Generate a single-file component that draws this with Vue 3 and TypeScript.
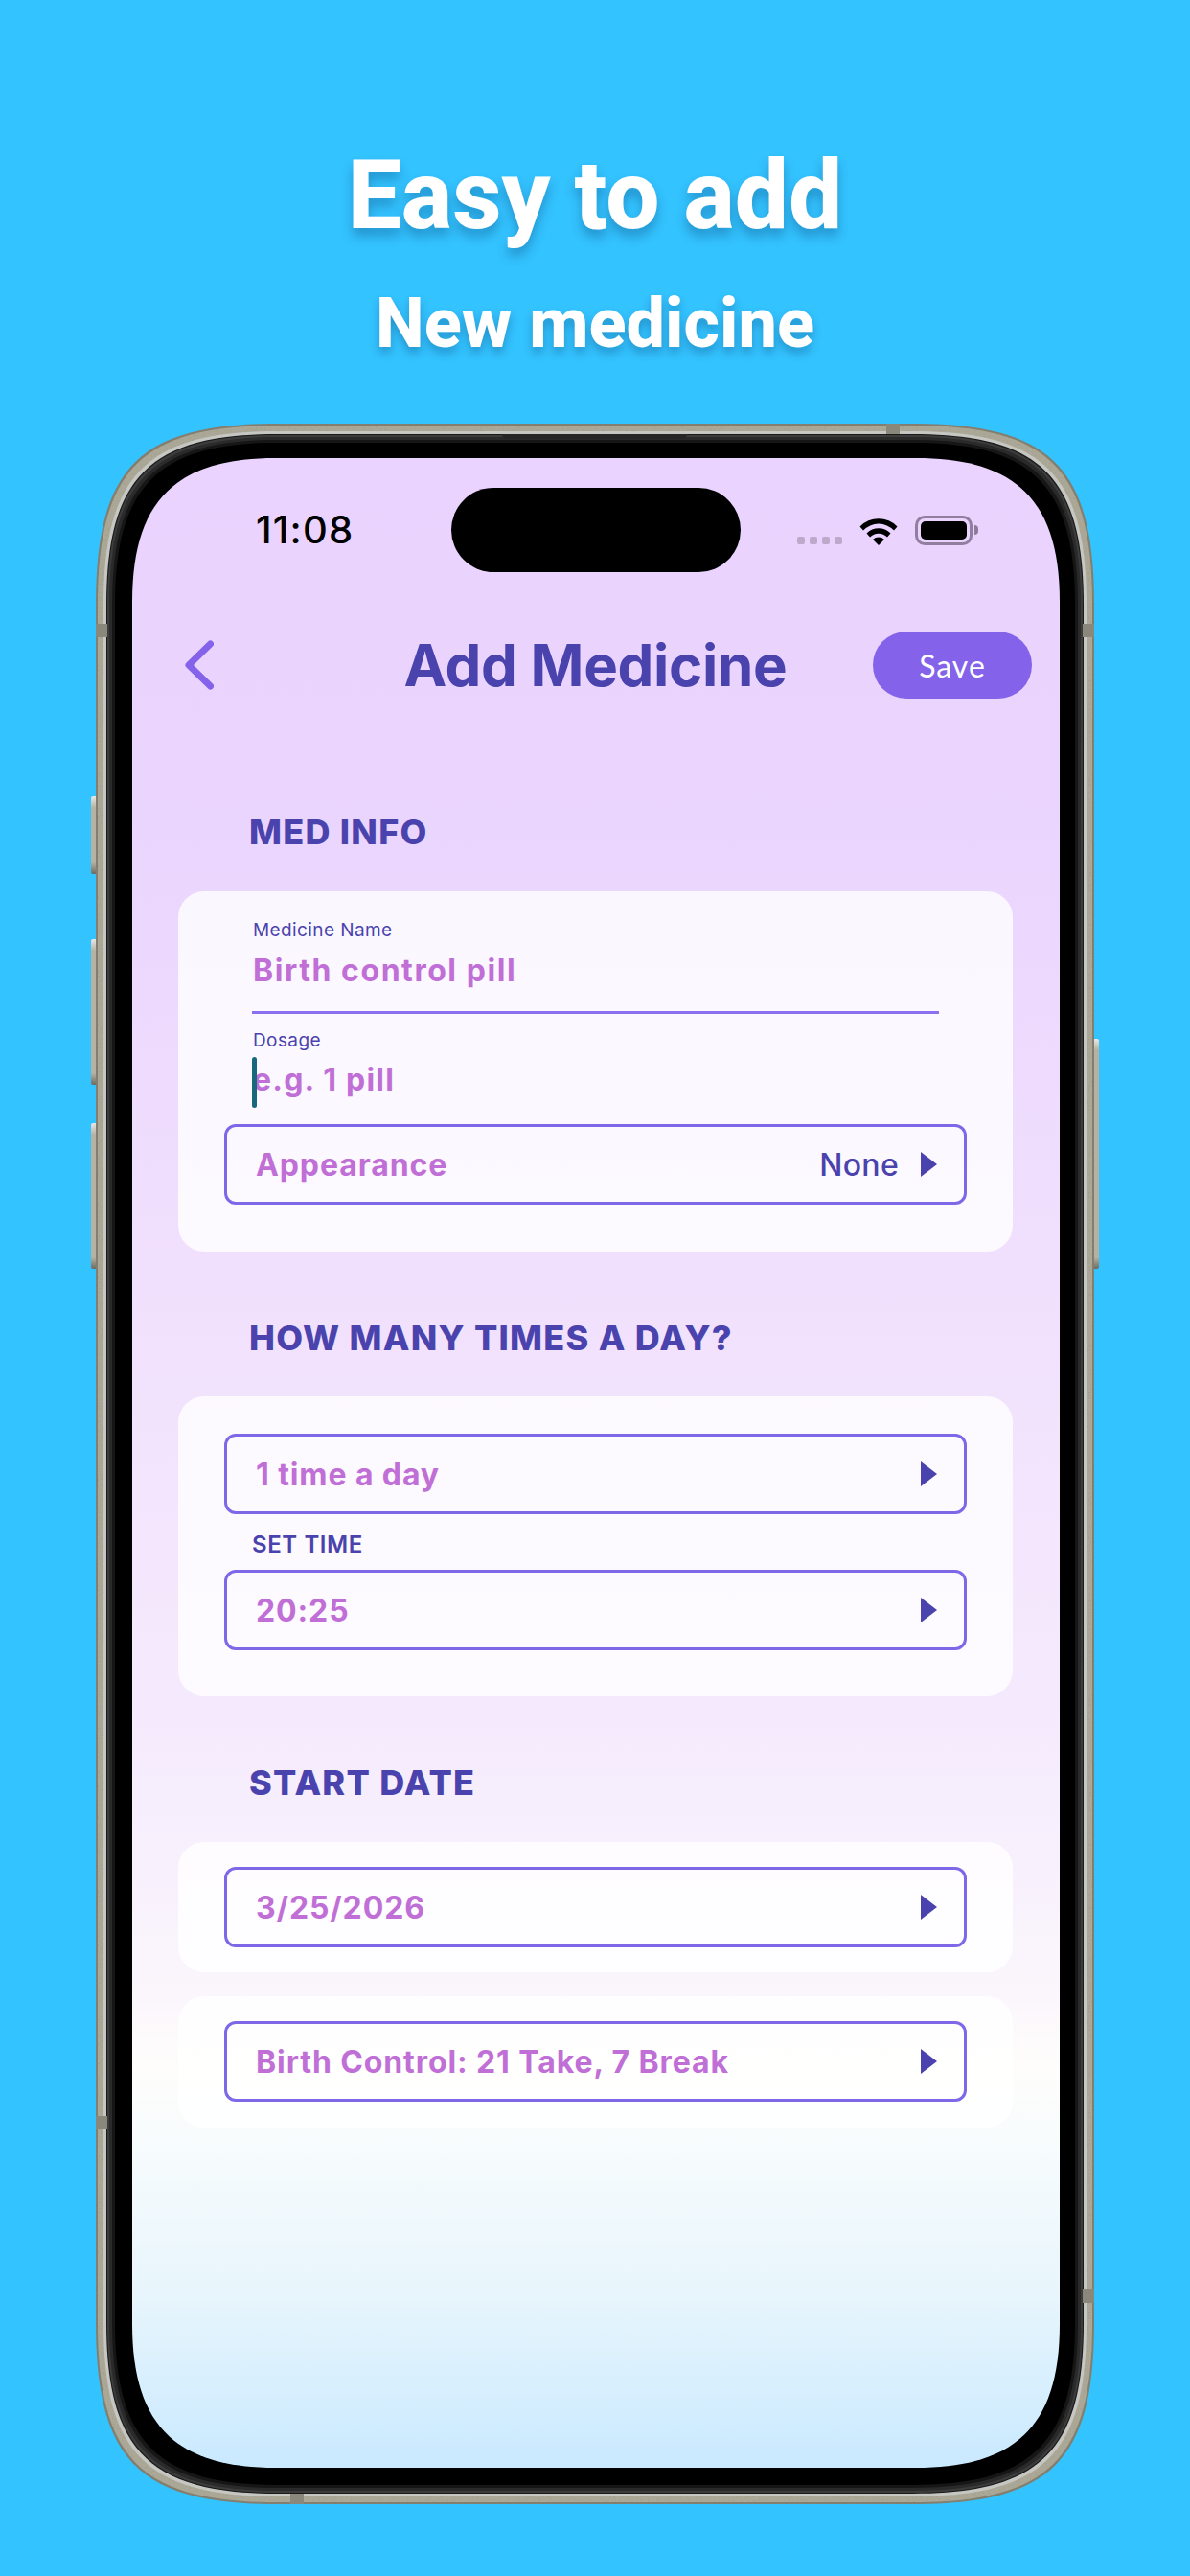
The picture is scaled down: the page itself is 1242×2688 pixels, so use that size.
<script setup lang="ts">
interface SelectRow { id: string; label: string; value?: string }
const daily: SelectRow = { id: 'times', label: '1 time a day' }
const time: SelectRow = { id: 'time', label: '20:25' }
const start: SelectRow = { id: 'start', label: '3/25/2026' }
const plan: SelectRow = { id: 'plan', label: 'Birth Control: 21 Take, 7 Break' }
const appearance: SelectRow = { id: 'look', label: 'Appearance', value: 'None' }

const W = 1042
const H = 2171
// Smooth-cornered device outline, inset from the outer edge of the phone.
function outline(inset: number): string {
  const r = 190 - 1.05 * inset
  const c = 45
  const x0 = inset
  const y0 = inset
  const x1 = W - inset
  const y1 = H - inset
  return `M${x0} ${y0 + r} C${x0} ${y0 + c} ${x0 + c} ${y0} ${x0 + r} ${y0} L${x1 - r} ${y0} C${x1 - c} ${y0} ${x1} ${y0 + c} ${x1} ${y0 + r} L${x1} ${y1 - r} C${x1} ${y1 - c} ${x1 - c} ${y1} ${x1 - r} ${y1} L${x0 + r} ${y1} C${x0 + c} ${y1} ${x0} ${y1 - c} ${x0} ${y1 - r} Z`
}
const frameLayers: { inset: number; fill: string }[] = [
  { inset: 0, fill: '#837f70' },
  { inset: 2, fill: '#aca897' },
  { inset: 8, fill: '#c6c7c2' },
  { inset: 11, fill: '#1a1a1a' },
  { inset: 12, fill: '#3c3c3c' },
  { inset: 14, fill: '#2a2a2a' },
  { inset: 17, fill: '#161616' },
  { inset: 20, fill: '#000000' }
]
</script>

<template>
  <div class="page">
    <header class="promo">
      <h1>Easy to add</h1>
      <h2>New medicine</h2>
    </header>

    <div class="device">
      <i class="btn b1"></i><i class="btn b2"></i><i class="btn b3"></i><i class="btn b4"></i>
      <svg class="shell" :viewBox="`0 0 ${W} ${H}`" :width="W" :height="H">
        <defs>
          <filter id="grain" x="0" y="0" width="100%" height="100%">
            <feTurbulence type="fractalNoise" baseFrequency="0.8" numOctaves="2" seed="4" result="n"/>
            <feColorMatrix in="n" type="matrix" values="0 0 0 0 0.28  0 0 0 0 0.27  0 0 0 0 0.22  0 0 0 1.6 -0.85" result="d"/>
            <feComposite in="d" in2="SourceAlpha" operator="in" result="g"/>
            <feMerge><feMergeNode in="SourceGraphic"/><feMergeNode in="g"/></feMerge>
          </filter>
        </defs>
        <path :d="outline(0)" :fill="frameLayers[0].fill"/>
        <path :d="outline(2)" :fill="frameLayers[1].fill" filter="url(#grain)"/>
        <path v-for="l in frameLayers.slice(2)" :key="l.inset" :d="outline(l.inset)" :fill="l.fill"/>
      </svg>
      <i class="band bt"></i><i class="band bb"></i><i class="band bl1"></i><i class="band br1"></i><i class="band bl2"></i><i class="band br2"></i>
      <i class="speaker"></i>
      <div class="screen">
        <div class="island"></div>
        <div class="status">
          <span class="clock">11:08</span>
          <div class="status-right">
            <div class="dots"><i></i><i></i><i></i><i></i></div>
            <svg class="wifi" viewBox="0 0 40 30" width="40" height="30">
              <path d="M0.5 10.5 A27 27 0 0 1 39.5 10.5 L36 14.5 A22 22 0 0 0 4 14.5 Z" fill="#000"/>
              <path d="M7.5 17.5 A17.5 17.5 0 0 1 32.5 17.5 L29 21.5 A12.5 12.5 0 0 0 11 21.5 Z" fill="#000"/>
              <path d="M14 24 A8.5 8.5 0 0 1 26 24 L20 30 Z" fill="#000"/>
            </svg>
            <div class="battery"><div class="fill"></div></div>
            <i class="tip"></i>
          </div>
        </div>

        <div class="nav">
          <svg class="back" viewBox="0 0 30 52" width="30" height="52">
            <path d="M26.5 4 L4 26 L26.5 48" fill="none" stroke="#8463ea" stroke-width="7" stroke-linecap="round" stroke-linejoin="round"/>
          </svg>
          <span class="title">Add Medicine</span>
          <button class="save">Save</button>
        </div>

        <h3 class="section first">MED INFO</h3>
        <section class="card info">
          <div class="field">
            <label>Medicine Name</label>
            <div class="value name">Birth control pill</div>
          </div>
          <div class="field second">
            <label>Dosage</label>
            <div class="value placeholder"><i class="caret"></i>e.g. 1 pill</div>
          </div>
          <div class="select">
            <span>{{ appearance.label }}</span>
            <span class="extra">{{ appearance.value }}</span>
            <i class="tri"></i>
          </div>
        </section>

        <h3 class="section">HOW MANY TIMES A DAY?</h3>
        <section class="card times">
          <div class="select"><span>{{ daily.label }}</span><i class="tri"></i></div>
          <div class="small-label">SET TIME</div>
          <div class="select"><span>{{ time.label }}</span><i class="tri"></i></div>
        </section>

        <h3 class="section">START DATE</h3>
        <section class="card thin">
          <div class="select"><span>{{ start.label }}</span><i class="tri"></i></div>
        </section>
        <section class="card thin plan">
          <div class="select"><span>{{ plan.label }}</span><i class="tri"></i></div>
        </section>
      </div>
    </div>
  </div>
</template>

<style>
html, body { margin: 0; background: #33c3ff; }
</style>

<style scoped>
.page {
  width: 1242px;
  height: 2688px;
  background: #33c3ff;
  overflow: hidden;
  display: flex;
  flex-direction: column;
  align-items: center;
  font-family: "Inter", "Liberation Sans", sans-serif;
}
.promo {
  height: 442px;
  width: 100%;
  flex: none;
  text-align: center;
  color: #fff;
  font-family: Roboto, "Liberation Sans", sans-serif;
}
.promo h1 {
  margin: 0;
  padding-top: 145px;
  font-size: 100px;
  line-height: 118px;
  font-weight: 800;
  text-shadow: 0 8px 12px rgba(0, 40, 90, 0.3);
}
.promo h2 {
  margin: 0;
  padding-top: 34px;
  font-size: 72px;
  line-height: 82px;
  font-weight: 800;
  text-shadow: 0 6px 10px rgba(0, 40, 90, 0.3);
}
.device {
  position: relative;
  box-sizing: border-box;
  width: 1042px;
  height: 2171px;
  flex: none;
  padding: 36px 36px 38px 38px;
}
.shell { position: absolute; left: 0; top: 0; display: block; }
.btn {
  position: absolute;
  width: 6px;
  background: linear-gradient(180deg, #e8e8e3 0, #b6b2a2 12px, #b6b2a2 calc(100% - 12px), #6e6b60 100%);
  border-radius: 2px 0 0 2px;
}
.b1 { left: -5px; top: 389px; height: 81px; }
.b2 { left: -5px; top: 538px; height: 152px; }
.b3 { left: -5px; top: 730px; height: 152px; }
.b4 { right: -5px; top: 642px; height: 240px; border-radius: 0 2px 2px 0; }
.band { position: absolute; background: #8a877b; }
.bt { left: 825px; top: 0; width: 14px; height: 11px; }
.bb { left: 203px; bottom: 0; width: 14px; height: 11px; }
.bl1 { left: 0; top: 209px; width: 12px; height: 14px; }
.br1 { right: 0; top: 209px; width: 12px; height: 14px; }
.bl2 { left: 0; top: 1766px; width: 12px; height: 14px; }
.br2 { right: 0; top: 1947px; width: 12px; height: 14px; }
.speaker {
  position: absolute;
  left: 423px;
  top: 11px;
  width: 195px;
  height: 5px;
  background: #262626;
  clip-path: polygon(0 0, 100% 0, 98% 100%, 2% 100%);
}
.screen {
  position: relative;
  box-sizing: border-box;
  width: 968px;
  height: 2097px;
  padding: 0 49px 0 48px;
  clip-path: path("M0 150 C0 45 45 0 150 0 L818 0 C923 0 968 45 968 150 L968 1947 C968 2052 923 2097 818 2097 L150 2097 C45 2097 0 2052 0 1947 Z");
  background: linear-gradient(180deg, #ead3fe 0, #ead5fe 18%, #f1e0fd 41%, #f5ebfd 64%, #f7effd 68%, #fbf6fc 76.5%, #fefdfb 80%, #f8fcfd 83.5%, #e7f5fc 91.6%, #c9e9ff 100%);
}
.island {
  position: absolute;
  left: 333px;
  top: 31px;
  width: 302px;
  height: 88px;
  border-radius: 44px;
  background: #000;
}
.status {
  height: 90px;
  margin: 0 -49px 0 -48px;
  padding: 0 91px 0 129px;
  display: flex;
  align-items: flex-end;
  justify-content: space-between;
}
.clock {
  font-size: 40px;
  font-weight: 500;
  line-height: 40px;
  color: #000;
  letter-spacing: 1.2px;
  margin-bottom: -5px;
}
.status-right {
  position: relative;
  display: flex;
  align-items: center;
  margin-bottom: -1px;
}
.dots { display: flex; gap: 5px; margin-top: 20px; margin-right: 18px; }
.dots i { width: 8px; height: 8px; border-radius: 2px; background: #bfa9ca; }
.wifi { display: block; }
.battery {
  box-sizing: border-box;
  width: 60px;
  height: 31px;
  margin-left: 18px;
  border: 3px solid #927f9f;
  border-radius: 10px;
  padding: 3px;
}
.fill { width: 100%; height: 100%; background: #000; border-radius: 5px; }
.tip {
  position: absolute;
  right: -6px;
  top: 10px;
  width: 4px;
  height: 10px;
  background: #8d7b9a;
  border-radius: 0 4px 4px 0;
}
.nav {
  position: relative;
  display: flex;
  align-items: center;
  justify-content: center;
  height: 70px;
  margin-top: 91px;
}
.back { position: absolute; left: 7px; top: 9px; }
.title {
  font-size: 60px;
  font-weight: 700;
  color: #4a43ad;
  letter-spacing: -0.3px;
}
.save {
  position: absolute;
  right: -20px;
  top: 0;
  width: 166px;
  height: 70px;
  border: 0;
  border-radius: 35px;
  background: #8463ea;
  color: #fff;
  font-family: Lato, sans-serif;
  font-size: 32px;
  letter-spacing: 1px;
  padding: 0;
}
.section {
  margin: 68px 0 0;
  padding-left: 74px;
  font-size: 36px;
  line-height: 44px;
  font-weight: 800;
  color: #4a43ad;
  letter-spacing: 1.25px;
}
.section.first { margin-top: 117px; }
.card {
  box-sizing: border-box;
  width: 871px;
  border-radius: 27px;
  background: rgba(255, 255, 255, 0.8);
}
.info { margin-top: 40px; height: 376px; padding: 30px 48px 0; }
.times { margin-top: 39px; height: 313px; padding: 39px 48px 0; }
.thin { margin-top: 40px; height: 136px; padding: 26px 48px 0; }
.plan { margin-top: 25px; height: 137px; }
.field { margin-left: 29px; width: 717px; }
.field label {
  display: block;
  padding-left: 1px;
  font-size: 19px;
  line-height: 22px;
  color: #4a43ad;
  letter-spacing: 0.4px;
}
.value {
  position: relative;
  margin-top: 9px;
  padding-left: 1px;
  font-size: 32px;
  line-height: 44px;
  font-weight: 700;
  color: #c06fd6;
  letter-spacing: 1.2px;
}
.name {
  padding-bottom: 23px;
  letter-spacing: 1.55px;
  box-shadow: inset 0 -3px 0 #8a6ff0;
}
.second { margin-top: 17px; }
.second .value { margin-top: 8px; }
.caret {
  position: absolute;
  left: 0;
  top: -2px;
  width: 5px;
  height: 53px;
  border-radius: 3px;
  background: #17687f;
}
.select {
  box-sizing: border-box;
  display: flex;
  align-items: center;
  height: 84px;
  padding: 0 28px 0 30px;
  border: 3px solid #7f68e8;
  border-radius: 12px;
  font-size: 32px;
  font-weight: 700;
  color: #c06fd6;
  letter-spacing: 0.9px;
}
.info .select { margin-top: 24px; }
.select > span:first-child { flex: 1; }
.extra { color: #4a43ad; font-weight: 500; margin-right: 23px; letter-spacing: 0.3px; }
.tri {
  width: 0;
  height: 0;
  border-left: 17px solid #4a43ad;
  border-top: 13px solid transparent;
  border-bottom: 13px solid transparent;
}
.small-label {
  height: 58px;
  box-sizing: border-box;
  padding: 18px 0 0 29px;
  font-size: 24px;
  line-height: 28px;
  font-weight: 600;
  color: #4a43ad;
  letter-spacing: 0.6px;
}
</style>
